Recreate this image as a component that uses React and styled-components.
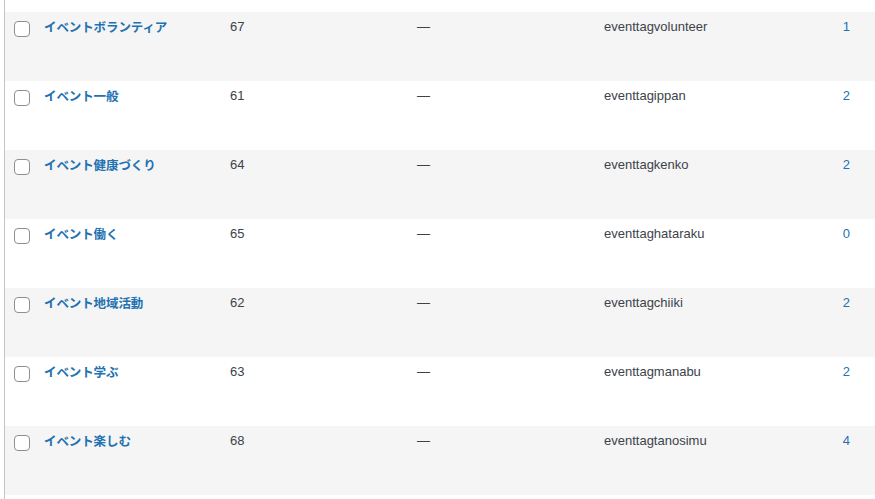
import React from 'react'
import styled, { createGlobalStyle } from 'styled-components'

const Global = createGlobalStyle`
  html, body {
    margin: 0;
    padding: 0;
    background: #fff;
  }
  body {
    font-family: "Liberation Sans", "Noto Sans CJK JP", sans-serif;
    font-size: 13px;
    color: #3c434a;
  }
`

const Page = styled.div`
  width: 875px;
  height: 499px;
  overflow: hidden;
  padding-left: 4px;
  box-sizing: border-box;
`

const Table = styled.div`
  border-left: 1px solid #c3c4c7;
  padding-top: 12px;
  min-height: 499px;
`

const Row = styled.div`
  display: grid;
  grid-template-columns: 39px 186px 187px 187px 206px 1fr;
  align-items: start;
  height: 69px;
  box-sizing: border-box;
  padding-top: 5px;
  background: ${p => (p.$alt ? '#f5f5f5' : '#fff')};
`

const CheckCell = styled.div`
  padding: 4px 0 0 9px;
`

const Check = styled.span`
  display: block;
  width: 14px;
  height: 14px;
  border: 1px solid #8c8f94;
  border-radius: 4px;
  background: #fff;
`

const Cell = styled.div`
  line-height: 19px;
  white-space: nowrap;
`

const Name = styled(Cell)`
  color: #2271b1;
  font-weight: 700;
  font-family: "Noto Sans CJK JP", sans-serif;
  font-size: 12.5px;
  letter-spacing: -0.1px;
`

const Count = styled(Cell)`
  color: #2271b1;
  text-align: right;
  padding-right: 25px;
`

const rows = [
  ['イベントボランティア', 67, 'eventtagvolunteer', 1],
  ['イベント一般', 61, 'eventtagippan', 2],
  ['イベント健康づくり', 64, 'eventtagkenko', 2],
  ['イベント働く', 65, 'eventtaghataraku', 0],
  ['イベント地域活動', 62, 'eventtagchiiki', 2],
  ['イベント学ぶ', 63, 'eventtagmanabu', 2],
  ['イベント楽しむ', 68, 'eventtagtanosimu', 4],
]

export default function App() {
  return (
    <Page>
      <Global />
      <Table>
        {rows.map(([name, id, slug, count], i) => (
          <Row key={id} $alt={i % 2 === 0}>
            <CheckCell><Check /></CheckCell>
            <Name>{name}</Name>
            <Cell>{id}</Cell>
            <Cell>—</Cell>
            <Cell>{slug}</Cell>
            <Count>{count}</Count>
          </Row>
        ))}
        <Row />
      </Table>
    </Page>
  )
}
